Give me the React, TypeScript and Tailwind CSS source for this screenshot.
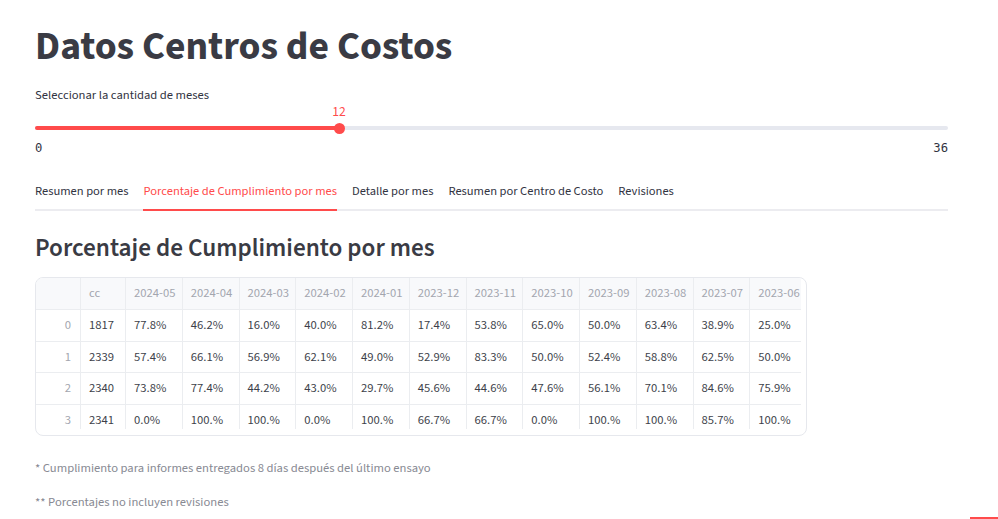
import React from "react";

const months = [
  "2024-05", "2024-04", "2024-03", "2024-02", "2024-01", "2023-12",
  "2023-11", "2023-10", "2023-09", "2023-08", "2023-07", "2023-06",
];

const rows: { cc: string; vals: string[] }[] = [
  { cc: "1817", vals: ["77.8%", "46.2%", "16.0%", "40.0%", "81.2%", "17.4%", "53.8%", "65.0%", "50.0%", "63.4%", "38.9%", "25.0%"] },
  { cc: "2339", vals: ["57.4%", "66.1%", "56.9%", "62.1%", "49.0%", "52.9%", "83.3%", "50.0%", "52.4%", "58.8%", "62.5%", "50.0%"] },
  { cc: "2340", vals: ["73.8%", "77.4%", "44.2%", "43.0%", "29.7%", "45.6%", "44.6%", "47.6%", "56.1%", "70.1%", "84.6%", "75.9%"] },
  { cc: "2341", vals: ["0.0%", "100.%", "100.%", "0.0%", "100.%", "66.7%", "66.7%", "0.0%", "100.%", "100.%", "85.7%", "100.%"] },
];

const tabs = [
  "Resumen por mes",
  "Porcentaje de Cumplimiento por mes",
  "Detalle por mes",
  "Resumen por Centro de Costo",
  "Revisiones",
];

const cols = "grid grid-cols-[45px_45px_repeat(12,56.75px)]";
const cell = "border-r border-[#ebedf0] px-[8px] flex items-center whitespace-nowrap";

export default function App() {
  return (
    <div className="relative w-[998px] h-[519px] overflow-hidden bg-white text-[#31333f] font-['Source_Sans_3','Source_Sans_Pro',sans-serif]">
      <div className="pl-[35px] pr-[50px] pt-[23px]">
        {/* title */}
        <h1 className="text-[39.6px] leading-[48px] font-bold text-[#3a3b44]">Datos Centros de Costos</h1>

        {/* slider */}
        <div className="mt-[16px] text-[12.6px] leading-[16px]">Seleccionar la cantidad de meses</div>
        <div className="relative h-[38px]">
          <div className="absolute left-0 right-0 top-[23px] h-[4px] rounded-full bg-[#e6e8ef]" />
          <div className="absolute left-0 w-[304px] top-[23px] h-[4px] rounded-full bg-[#ff4b4b]" />
          <div className="absolute left-[298.5px] top-[19.5px] w-[11px] h-[11px] rounded-full bg-[#ff4b4b]" />
          <div className="absolute left-[289px] w-[30px] top-[1px] text-center text-[13.6px] leading-[15px] text-[#ff4b4b]">
            12
          </div>
        </div>
        <div className="flex justify-between font-['DejaVu_Sans_Mono',monospace] text-[12.2px] leading-[14px] text-[#31333f]">
          <span>0</span>
          <span>36</span>
        </div>

        {/* tabs */}
        <div className="mt-[28px] flex gap-[15px] border-b-2 border-[#ececf0] text-[12.5px] leading-[16px]">
          {tabs.map((t, i) => (
            <div
              key={t}
              className={
                i === 1
                  ? "pb-[10px] -mb-[2px] border-b-2 border-[#ff4b4b] text-[#ff4b4b]"
                  : "pb-[10px] text-[#31333f]"
              }
            >
              {t}
            </div>
          ))}
        </div>

        {/* section heading */}
        <h3 className="mt-[21px] text-[25.2px] leading-[32px] font-semibold text-[#3a3b44]">
          Porcentaje de Cumplimiento por mes
        </h3>

        {/* table */}
        <div className="mt-[13px] w-[772px] h-[159px] rounded-[8px] border border-[#e6e8ed] overflow-hidden">
          <div className="w-[765px] h-[151px] overflow-hidden text-[12.6px] text-[#3d3f4a]">
            <div className={`${cols} h-[32px] bg-[#f8f9fb] border-b border-[#ebedf0] text-[#a3a6af]`}>
              <div className={cell} />
              <div className={cell}>cc</div>
              {months.map((m) => (
                <div key={m} className={cell}>
                  {m}
                </div>
              ))}
            </div>
            {rows.map((r, i) => (
              <div key={r.cc} className={`${cols} h-[31.7px] border-b border-[#ebedf0]`}>
                <div className={`${cell} justify-end pr-[9px] text-[#a3a6af]`}>{i}</div>
                <div className={cell}>{r.cc}</div>
                {r.vals.map((v, j) => (
                  <div key={j} className={cell}>
                    {v}
                  </div>
                ))}
              </div>
            ))}
          </div>
        </div>

        {/* notes */}
        <p className="mt-[24px] text-[12.6px] leading-[16px] text-[#888a93]">
          * Cumplimiento para informes entregados 8 días después del último ensayo
        </p>
        <p className="mt-[18px] text-[12.6px] leading-[16px] text-[#888a93]">** Porcentajes no incluyen revisiones</p>
      </div>

      {/* status bar fragment */}
      <div className="absolute right-0 bottom-0 w-[28px] h-[2px] bg-[#ff4b4b]" />
    </div>
  );
}
